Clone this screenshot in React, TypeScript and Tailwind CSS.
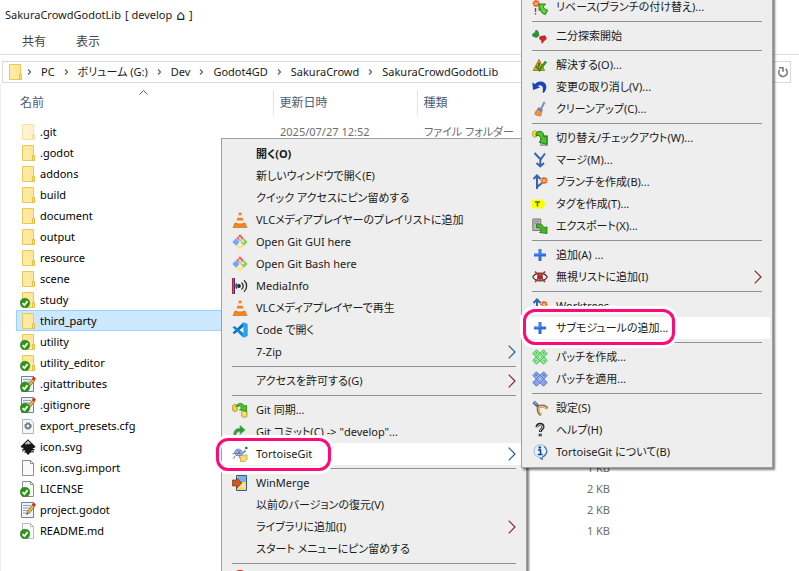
import type { ReactNode } from "react";
import { clsx } from "clsx";

type IconProps = { children: ReactNode };

function Svg({ children }: IconProps) {
  return (
    <svg viewBox="0 0 16 16" className="h-4 w-4 shrink-0" aria-hidden="true">
      {children}
    </svg>
  );
}

/* ---------- File icons ---------- */

const FolderShape = () => (
  <>
    <path d="M2.5 .5h11v15h-11z" fill="#ffe698" stroke="#ecc850" />
    <path d="M3 1h3l6 14H3z" fill="#ffeeb5" opacity=".5" />
    <path d="M12.5 10.5h2v5h-2z" fill="#ffe698" stroke="#e6bd3c" />
  </>
);

const CheckBadge = () => (
  <>
    <circle cx="5" cy="11" r="4.8" fill="#2c9416" stroke="#23780f" strokeWidth=".5" />
    <path d="M2.6 11.2l1.8 1.9 3.2-4" fill="none" stroke="#fff" strokeWidth="1.7" />
  </>
);

const PageShape = () => (
  <>
    <path d="M2.5 .5h8l3 3v12h-11z" fill="#fafafa" stroke="#8d8d8d" />
    <path d="M10.5 .5v3h3" fill="none" stroke="#8d8d8d" />
  </>
);

const EditShape = () => (
  <>
    <path d="M1.5 .5h12v15h-12z" fill="#edf3fa" stroke="#71839c" />
    <path d="M3 3.5h8M3 6h7M3 8.5h5M3 11h4" stroke="#8da4c0" />
    <path d="M6.8 12.2l.8-3 5-6.2 2 1.6-5 6.3z" fill="#f3bd3f" stroke="#74531b" strokeWidth=".7" />
    <path d="M12 2.7L13.7.8l2 1.7-1.5 2z" fill="#e22c20" stroke="#e22c20" strokeWidth=".6" />
    <path d="M6.5 12.6l.4-1.7 1.3 1z" fill="#222" />
  </>
);

const fileIcons: Record<string, ReactNode> = {
  hidden: <g opacity=".5"><FolderShape /></g>,
  folder: <FolderShape />,
  folderOk: <><FolderShape /><CheckBadge /></>,
  editOk: <><EditShape /><CheckBadge /></>,
  edit: <EditShape />,
  page: <PageShape />,
  pageOk: <><PageShape /><CheckBadge /></>,
  mdOk: <><g opacity=".6"><PageShape /><path d="M7 5.5l3 3-3 3z" fill="#5d9bb0" /></g><CheckBadge /></>,
  config: (
    <>
      <path d="M2.5 1.5h8l3 3v11h-11z" fill="#f7f7f7" stroke="#b4b4b4" />
      <circle cx="8" cy="8" r="2.2" fill="none" stroke="#617582" strokeWidth="1.6" />
      <circle cx="8" cy="8" r="3.4" fill="none" stroke="#617582" strokeWidth="1" strokeDasharray="1.4 1.3" />
    </>
  ),
  inkscape: (
    <>
      <path d="M8 .3l7.2 6.9c.8 1-.6 1.8-2.7 2 .5.9 2.3.8 2.2 1.5-.3.9-3 .5-3.4 1.2.1.7 1.1.6.9 1.2-.4.8-2.2.4-2.6 1.2-.2.6-.6 1.4-1.6 1.4s-1.2-.9-1.6-1.6c-.5-.7-2-.3-2.2-1.1 0-.7 1.4-.5 1.3-1.3-.3-.8-3-.4-3.3-1.3 0-.7 1.5-.6 1.7-1.3C2.300 8.800.2 8.200.8 7.200z" fill="#171717" />
      <path d="M8 1.500l3.500 3.400-1.800-.3-1 1.200-1.200-1-1.500 1-1.200-.9z" fill="#b9c6d6" />
      <path d="M12 12.800h2M2 12h1.500" stroke="#171717" />
    </>
  ),
};

/* ---------- Menu icons ---------- */

const GreenArrow = () => (
  <path d="M4 3.200C8-.5 12 1.500 12 7l3-.8V14.500L7 12l2-1.800C9 6.500 7.500 5 4 5.500z" fill="#4cc42a" stroke="#19700f" strokeWidth=".9" />
);

const Plus = () => (
  <>
    <path d="M6.500 2h3v4.500H14v3H9.500V14h-3V9.500H2v-3h4.500z" fill="#2f6fdc" />
    <path d="M7 2.500h1v4.700H2.500" fill="none" stroke="#6ca0f5" strokeWidth=".6" />
  </>
);

const Spark = () => (
  <>
    <path d="M12 3v7M8.500 6.500h7M9.600 4l5 5M14.600 4l-5 5" stroke="#f34a20" strokeWidth="1.500" />
    <circle cx="12" cy="6.500" r="1.600" fill="#ffd23e" />
  </>
);

const Branch = () => (
  <>
    <path d="M5 15V2M1.500 5L5 1.500 8.500 5M5 13l5-4" fill="none" stroke="#3665ac" strokeWidth="2" />
    <Spark />
  </>
);

const Patch = ({ fill, edge }: { fill: string; edge: string }) => (
  <>
    <path d="M4.500.8L8 4.300 11.500.8l3.700 3.700L11.700 8l3.500 3.500-3.700 3.700L8 11.700l-3.500 3.500-3.700-3.700L4.300 8 .8 4.500z" fill={fill} stroke={edge} strokeWidth=".9" strokeLinejoin="round" />
    <path d="M4.300 8L8 4.300 11.700 8 8 11.700z" fill="#ffffff55" stroke={edge} strokeWidth=".9" />
    <path d="M3 4.500h1.500M4.500 3v1.500M11.500 3v1.500M11.500 4.500H13M3 11.500h1.500M11.500 11.500H13M8 6v1M8 9v1M6 8h1M9 8h1" stroke={edge} strokeWidth=".8" />
  </>
);

const menuIcons: Record<string, ReactNode> = {
  vlc: (
    <>
      <path d="M3 11h10l2 4.500H1z" fill="#f08a1d" stroke="#b8651a" strokeWidth=".6" />
      <path d="M7 .5h2L12.500 12.500c-2 1.200-7 1.200-9 0z" fill="#ef7f1a" />
      <path d="M6.200 3.300h3.600l.8 2.500H5.400zM4.600 8.500h6.800l.7 2.300c-2.200 1-6 1-8.200 0z" fill="#f2f2f2" />
    </>
  ),
  git: (
    <>
      <path d="M8 .2l3.700 3.700L8 7.600 4.300 3.900z" fill="#f0625c" />
      <path d="M4 4.300L7.700 8 4 11.700.3 8z" fill="#71a9f7" />
      <path d="M12 4.300L15.700 8 12 11.700 8.300 8z" fill="#8cd05c" />
      <path d="M8 8.400l3.700 3.700L8 15.800l-3.700-3.700z" fill="#fbe38a" />
      <path d="M5.500 2l5.500 5.500M8 4.500v7" fill="none" stroke="#f4f4f4" strokeWidth=".8" />
      <circle cx="8" cy="4.600" r="1" fill="#fff" />
      <circle cx="11" cy="7.600" r="1" fill="#fff" />
      <circle cx="8" cy="11.300" r="1" fill="#fff" />
    </>
  ),
  mediainfo: (
    <>
      <path d="M.500 0v16" stroke="#d21b1b" />
      <path d="M1.500 0v16" stroke="#27a327" />
      <path d="M2.500 0v16" stroke="#2333b5" />
      <circle cx="7" cy="8" r="1.900" fill="#222" />
      <path d="M5 5.500a3.500 3.500 0 000 5M9.500 4.500a4.500 4.500 0 010 7M12 2.300a7.500 7.500 0 010 11.400" fill="none" stroke="#333" strokeWidth="1.400" />
    </>
  ),
  vscode: (
    <>
      <path d="M11.500.3L15.700 2v12l-4.200 1.700z" fill="#25a3ee" />
      <path d="M11.500.3v4.500L2.500 12 .5 10.700z" fill="#0870b8" />
      <path d="M11.500 15.700v-4.500L2.500 4 .5 5.300z" fill="#1286cf" />
    </>
  ),
  sync: (
    <>
      <path d="M.7 3.500L3 2.200l2.300 1.300v5L3 9.800.7 8.500z" fill="#f6d33e" stroke="#a8801b" strokeWidth=".7" />
      <path d="M9.700 9.500L12 8.200l3 1.300v5l-3 1-2.300-1.300z" fill="#f6df63" stroke="#a8801b" strokeWidth=".7" />
      <path d="M4 4.500C6.500 0 11 .8 12 4l2.600-.5v6L7.500 7.800l2-1.800C9 4 6.500 3.700 4 4.500z" fill="#46c628" stroke="#157510" strokeWidth=".7" />
    </>
  ),
  commit: (
    <path d="M2 13.500C.5 7 4 4 8 4.200V1.300L13.300 6 8 10.500V7.800C5.500 7.500 3 9 4.700 13.500z" fill="#31983a" stroke="#77bb70" strokeWidth=".7" />
  ),
  tortoise: (
    <>
      <path d="M2.500 6.500C3.500 2 9 2 10.500 6.500L10 9.500H4z" fill="#a3b8dd" stroke="#5c76a8" strokeWidth=".8" />
      <path d="M5 4l3 3M8.500 4L5 8M.5 7.500h9M3 10l-1.500 3M7 10l1 2.500" fill="none" stroke="#5c76a8" strokeWidth=".9" />
      <path d="M11 7l2.500-2.500" stroke="#7c94c3" strokeWidth="2" />
      <circle cx="14.300" cy="2" r="1.300" fill="#29548b" />
      <path d="M8.500 11l2-2H15v4.500l-2 2H8.500z" fill="#f5dc79" stroke="#bd9536" strokeWidth=".7" />
    </>
  ),
  winmerge: (
    <>
      <path d="M4.500.5h10v15h-10z" fill="#fbd665" stroke="#315f91" />
      <path d="M6 1h8v6H6z" fill="#79b2df" />
      <path d="M8.500 9.500h5M8.500 11.500h5" stroke="#f2f2f2" />
      <path d="M.5 5h4V2.500L9.800 8l-5.300 5.500V11h-4z" fill="#c9582a" stroke="#7d3119" strokeWidth=".7" />
    </>
  ),
  red: <circle cx="8" cy="8" r="8" fill="#d91717" />,
  rebase: (
    <>
      <path d="M4 1v7M.5 4.500h7M1.600 2l5 5M6.600 2l-5 5" stroke="#f34a20" strokeWidth="1.500" />
      <circle cx="4" cy="4.500" r="1.500" fill="#ffd23e" />
      <path d="M3.500 9v4M3.500 14v1.500" stroke="#d9252a" strokeWidth="1.400" />
      <path d="M7 5h6.500l-2 2.200c0 2 1 3 4 3.800l-2 4.500C9.500 14.500 8 12 8.700 9.700L7 11.500z" fill="#5dd632" stroke="#19700f" strokeWidth=".9" />
    </>
  ),
  bisect: (
    <>
      <path d="M4 2l2 1.500L7 7.500 4.500 9.500l-4-1.500L1 5.500l2-.5z" fill="#219b35" stroke="#0e6820" strokeWidth=".6" />
      <path d="M8 8.500l5-.7 1.500 3-2.500 2-2 2.500-.5-3L7.500 11z" fill="#d5272d" stroke="#98141a" strokeWidth=".6" />
    </>
  ),
  resolve: (
    <>
      <path d="M7 2.500L12.500 13.500H1.200z" fill="#f4ad29" stroke="#b77212" />
      <path d="M7 5.500v4M7 11v1.500" stroke="#704409" strokeWidth="1.700" />
      <path d="M4 9l3.500 4L14 4.500" fill="none" stroke="#269b20" strokeWidth="2.600" />
    </>
  ),
  revert: (
    <path d="M.3 3.500L1 11l7-2.500-2.300-1.500C9 5 12 6.500 10.500 13l1.200 1C17 8 13.500 1.800 8 2.500 6 2.700 4.500 3.500 3 5z" fill="#1e43b8" />
  ),
  cleanup: (
    <>
      <path d="M12.500 1L9 8" stroke="#858cab" strokeWidth="1.900" />
      <path d="M6.500 6L11 9l-1.200 2L5.300 8.300z" fill="#6778bf" />
      <path d="M5 8.500l4.700 2.700-1 3.800-5-1-1-1.500z" fill="#f0a34a" stroke="#bb6a26" strokeWidth=".7" />
      <path d="M5.500 10l-2 3M7.500 11l-1 3" stroke="#c87330" strokeWidth=".7" />
    </>
  ),
  switch: (
    <>
      <path d="M8.500 5.500h7v10h-7z" fill="#b5b5b5" stroke="#858585" strokeWidth=".7" />
      <path d="M.7 2L3 .7 5.500 2v4L3 7.300.7 6z" fill="#f7df48" stroke="#b28c20" strokeWidth=".8" />
      <GreenArrow />
    </>
  ),
  merge: (
    <path d="M2.500 1l6 6.300M13 1.500L8.300 7.800V14M4.500 11l3.800 3.500 3.700-3.500" fill="none" stroke="#3665ac" strokeWidth="2" />
  ),
  branch: <Branch />,
  tag: (
    <>
      <path d="M0 3.500h10.500L14 8l-3.500 4.500H0z" fill="#ffff00" />
      <path d="M3 6h5M5.500 6v4.500" stroke="#36762d" strokeWidth="1.500" />
    </>
  ),
  export: (
    <>
      <path d="M.8 1h8v11.500h-8z" fill="#b7b7b7" stroke="#787878" />
      <path d="M2.500 3.500h4.500M2.500 5.500h4.500" stroke="#888" />
      <path d="M4.500 6.500c4-1 6.500 0 7.500 3l3-.6V15.500L7.500 14.500l2-2C9 10 7.500 9.500 4.500 9.800z" fill="#46b828" stroke="#1b720f" strokeWidth=".8" />
    </>
  ),
  plus: <Plus />,
  ignore: (
    <>
      <path d="M.7 8C4 2.800 12 2.800 15.300 8 12 13.200 4 13.200.7 8z" fill="#f8f8f8" stroke="#333" strokeWidth="1.200" />
      <circle cx="8" cy="8" r="2.800" fill="#333" />
      <path d="M3 2.500l10 10.500M13 2.500L3 13" stroke="#dc241d" strokeWidth="1.700" />
    </>
  ),
  patchGreen: <Patch fill="#8df093" edge="#42a94c" />,
  patchBlue: <Patch fill="#8faaf0" edge="#496bbf" />,
  settings: (
    <>
      <path d="M1.500 2l5.500 5" stroke="#53698b" strokeWidth="3.200" />
      <path d="M1.500 1.500l3 3M3.500.5l1 2" stroke="#b8c9df" strokeWidth="1" />
      <path d="M6.500 7c3-1.500 6.500-1 9 1.500M6.500 6.500c-1 3.500 0 6.500 2.500 8.500" fill="none" stroke="#906b35" strokeWidth="2.800" />
      <path d="M7 7c3-1 5.500-.5 8 1.500M7 7c-.8 3.500.2 5.500 2 7.500" fill="none" stroke="#e3c07c" strokeWidth="1.400" />
    </>
  ),
  help: (
    <>
      <path d="M5 5.200C5 1 11.500 1.500 11 5c-.2 2-2.700 2.200-2.700 5M8.200 11.800v2.500" fill="none" stroke="#222" strokeWidth="3" />
      <path d="M5.200 5.200C5.500 2 10.800 2 10.800 5c-.2 2-2.500 2.200-2.500 4.400M8.200 12.500v1" fill="none" stroke="#e5e5e5" strokeWidth="1" />
    </>
  ),
  about: (
    <>
      <path d="M8 .7a7 6.500 0 012.500 12.600L10 15.500l-3-2.200A7 6.500 0 018 .7z" fill="#e9f3fd" stroke="#9db8d6" />
      <path d="M12 2.500c4 3 3.500 8-1.500 10.500L10 15.500l-2-2" fill="none" stroke="#3f73ac" strokeWidth="1.100" />
      <circle cx="7.800" cy="3.500" r="1.300" fill="#113faa" />
      <path d="M6 6h2.500v5M5.800 10.500h4.700" fill="none" stroke="#113faa" strokeWidth="1.500" />
    </>
  ),
};

/* ---------- Data ---------- */

type FileRow = { name: string; icon: string; date?: string; type?: string; size?: string; selected?: boolean };

const files: FileRow[] = [
  { name: ".git", icon: "hidden", date: "2025/07/27 12:52", type: "ファイル フォルダー" },
  { name: ".godot", icon: "folder" },
  { name: "addons", icon: "folder" },
  { name: "build", icon: "folder" },
  { name: "document", icon: "folder" },
  { name: "output", icon: "folder" },
  { name: "resource", icon: "folder" },
  { name: "scene", icon: "folder" },
  { name: "study", icon: "folderOk" },
  { name: "third_party", icon: "folder", selected: true },
  { name: "utility", icon: "folderOk" },
  { name: "utility_editor", icon: "folderOk" },
  { name: ".gitattributes", icon: "editOk" },
  { name: ".gitignore", icon: "editOk" },
  { name: "export_presets.cfg", icon: "config" },
  { name: "icon.svg", icon: "inkscape" },
  { name: "icon.svg.import", icon: "page", size: "1 KB" },
  { name: "LICENSE", icon: "pageOk", size: "2 KB" },
  { name: "project.godot", icon: "edit", size: "2 KB" },
  { name: "README.md", icon: "mdOk", size: "1 KB" },
];

const crumbs = ["PC", "ボリューム (G:)", "Dev", "Godot4GD", "SakuraCrowd", "SakuraCrowdGodotLib"];

type Entry = {
  label: string;
  icon?: string;
  bold?: boolean;
  arrow?: string;
  marked?: boolean;
};

const contextMenu: (Entry | null)[] = [
  { label: "開く(O)", bold: true },
  { label: "新しいウィンドウで開く(E)" },
  { label: "クイック アクセスにピン留めする" },
  { label: "VLCメディアプレイヤーのプレイリストに追加", icon: "vlc" },
  { label: "Open Git GUI here", icon: "git" },
  { label: "Open Git Bash here", icon: "git" },
  { label: "MediaInfo", icon: "mediainfo" },
  { label: "VLCメディアプレイヤーで再生", icon: "vlc" },
  { label: "Code で開く", icon: "vscode" },
  { label: "7-Zip", arrow: "#1d5f9e" },
  null,
  { label: "アクセスを許可する(G)", arrow: "#8a2430" },
  null,
  { label: "Git 同期...", icon: "sync" },
  { label: 'Git コミット(C) -> "develop"...', icon: "commit" },
  { label: "TortoiseGit", icon: "tortoise", arrow: "#1d5f9e", marked: true },
  null,
  { label: "WinMerge", icon: "winmerge" },
  { label: "以前のバージョンの復元(V)" },
  { label: "ライブラリに追加(I)", arrow: "#8a2430" },
  { label: "スタート メニューにピン留めする" },
  null,
];

const gitMenu: (Entry | null)[] = [
  { label: "リベース(ブランチの付け替え)...", icon: "rebase" },
  null,
  { label: "二分探索開始", icon: "bisect" },
  null,
  { label: "解決する(O)...", icon: "resolve" },
  { label: "変更の取り消し(V)...", icon: "revert" },
  { label: "クリーンアップ(C)...", icon: "cleanup" },
  null,
  { label: "切り替え/チェックアウト(W)...", icon: "switch" },
  { label: "マージ(M)...", icon: "merge" },
  { label: "ブランチを作成(B)...", icon: "branch" },
  { label: "タグを作成(T)...", icon: "tag" },
  { label: "エクスポート(X)...", icon: "export" },
  null,
  { label: "追加(A) ...", icon: "plus" },
  { label: "無視リストに追加(I)", icon: "ignore", arrow: "#8a2430" },
  null,
  { label: "Worktrees", icon: "branch" },
  { label: "サブモジュールの追加...", icon: "plus", marked: true },
  null,
  { label: "パッチを作成...", icon: "patchGreen" },
  { label: "パッチを適用...", icon: "patchBlue" },
  null,
  { label: "設定(S)", icon: "settings" },
  { label: "ヘルプ(H)", icon: "help" },
  { label: "TortoiseGit について(B)", icon: "about" },
];

/* ---------- Parts ---------- */

function MenuItem({ entry }: { entry: Entry }) {
  return (
    <button
      type="button"
      role="menuitem"
      className={clsx(
        "flex h-[22px] w-full items-center gap-2 whitespace-nowrap pl-[10px] pr-2 text-left",
        entry.bold && "font-bold",
        entry.marked ? "bg-white" : "hover:bg-white"
      )}
    >
      <Svg>{entry.icon && menuIcons[entry.icon]}</Svg>
      <span className="flex-1">{entry.label}</span>
      {entry.arrow && (
        <svg viewBox="0 0 8 14" className="h-[14px] w-2" aria-hidden="true">
          <path d="M.7 .7L7 7 .7 13.300" fill="none" stroke={entry.arrow} strokeWidth="1.200" />
        </svg>
      )}
    </button>
  );
}

function Menu({ items, className, children }: { items: (Entry | null)[]; className: string; children?: ReactNode }) {
  return (
    <div
      role="menu"
      className={clsx(
        "absolute border border-[#a0a0a0] bg-[#eeeeee] py-1 pr-[2px] shadow-[2px_2px_2px_rgba(0,0,0,0.5)]",
        className
      )}
    >
      {items.map((entry, i) =>
        entry ? (
          <MenuItem key={i} entry={entry} />
        ) : (
          <div key={i} role="separator" className="flex h-[7px] items-center pl-[10px] pr-2">
            <div className="h-px w-full bg-[#919191]" />
          </div>
        )
      )}
      {children}
    </div>
  );
}

function Marker({ className }: { className: string }) {
  return (
    <div
      className={clsx(
        "pointer-events-none absolute rounded-[12px] border-[3px] border-[#ff0a78] shadow-[0_0_0_3px_#fff,inset_0_0_0_2px_#fff]",
        className
      )}
    />
  );
}

function Crumb({ label }: { label: string }) {
  return (
    <li className="flex items-center">
      <svg viewBox="0 0 5 6" className="mr-[9px] h-[6px] w-[5px]" aria-hidden="true">
        <path d="M1 .5L3.500 3 1 5.500" fill="none" stroke="#666" strokeWidth="1.300" />
      </svg>
      <a href="#" className="mr-[9px] whitespace-nowrap">{label}</a>
    </li>
  );
}

export default function App() {
  return (
    <div className="relative flex h-screen flex-col overflow-hidden bg-white font-['Noto_Sans','Noto_Sans_CJK_JP',sans-serif] text-[11px] leading-[20px] text-[#1a1a1a] [font-feature-settings:'palt']">
      <header className="border-b border-[#dcdcdc]">
        <h1 className="flex gap-1 px-[5px] pt-[5px]">
          <span>SakuraCrowdGodotLib</span>
          <span>[ develop</span>
          <span className="font-['DejaVu_Sans',sans-serif] text-[14px]">⌂</span>
          <span>]</span>
        </h1>
        <nav className="flex gap-[30px] px-[22px] pt-[7px] pb-[2px] text-[12px] text-[#444]">
          <button type="button">共有</button>
          <button type="button">表示</button>
        </nav>
      </header>

      <div className="mt-[6px] mr-2 ml-[2px] flex h-[22px] items-center border border-[#d9d9d9]">
        <div className="mx-1">
          <Svg>{fileIcons.folder}</Svg>
        </div>
        <ol className="flex flex-1">
          {crumbs.map((label) => (
            <Crumb key={label} label={label} />
          ))}
        </ol>
        <button type="button" aria-label="更新" className="flex h-full w-[14px] items-center justify-center">
          <svg viewBox="0 0 12 12" className="h-3 w-3" aria-hidden="true">
            <path d="M8.600 3A4.200 4.200 0 112.500 4M2 1.800h4v4" fill="none" stroke="#777" strokeWidth="1.600" />
          </svg>
        </button>
      </div>

      <main className="flex-1 border-l border-[#ececec] pt-[7px] pl-[15px]">
        <table className="w-[601px] table-fixed border-collapse">
          <colgroup>
            <col className="w-[257px]" />
            <col className="w-[144px]" />
            <col />
            <col className="w-[94px]" />
          </colgroup>
          <thead className="text-left text-[12px] text-[#4c607a]">
            <tr className="h-[25px]">
              <th className="relative px-1 font-normal">
                名前
                <svg viewBox="0 0 9 5" className="absolute top-0 left-[123px] h-[5px] w-[9px]" aria-hidden="true">
                  <path d="M.5 4.500l4-4 4 4" fill="none" stroke="#666" />
                </svg>
              </th>
              <th className="border-l border-[#e2e2e2] px-[6px] font-normal">更新日時</th>
              <th className="border-l border-[#e2e2e2] px-[6px] font-normal">種類</th>
              <th />
            </tr>
            <tr className="h-[6px]" />
          </thead>
          <tbody>
            {files.map((file) => (
              <tr
                key={file.name}
                className={clsx(
                  "h-[21px]",
                  file.selected && "bg-[#cce8ff] outline outline-1 -outline-offset-1 outline-[#99d1ff]"
                )}
              >
                <td className="p-0">
                  <div className="flex items-center gap-1 pl-1 text-black">
                    <Svg>{fileIcons[file.icon]}</Svg>
                    <span>{file.name}</span>
                  </div>
                </td>
                <td className="px-[7px] py-0 text-[#6d6d6d]">{file.date}</td>
                <td className="px-[7px] py-0 whitespace-nowrap text-[#6d6d6d]">{file.type}</td>
                <td className="px-[7px] py-0 text-right text-[#6d6d6d]">{file.size}</td>
              </tr>
            ))}
          </tbody>
        </table>
      </main>

      <Menu items={contextMenu} className="top-[138px] left-[221px] w-[306px]">
        <div className="flex h-[22px] items-center pl-[10px]">
          <Svg>{menuIcons.red}</Svg>
        </div>
      </Menu>
      <Marker className="top-[438px] left-[216px] h-[33px] w-[115px]" />
      <Menu items={gitMenu} className="-top-[9px] left-[521px] w-[252px]" />
      <Marker className="top-[309px] left-[523px] h-[36px] w-[152px]" />
    </div>
  );
}
